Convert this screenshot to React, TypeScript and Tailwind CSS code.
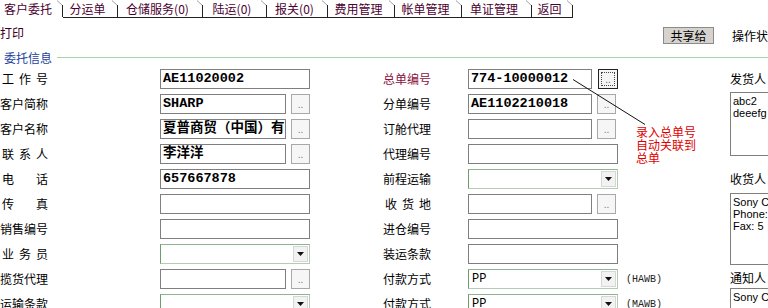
import React from 'react';

const tabs = [
  { label: '客户委托', w: 'w-[63px]', active: true },
  { label: '分运单', w: 'w-[55px]' },
  { label: '仓储服务(0)', w: 'w-[85px]' },
  { label: '陆运(0)', w: 'w-[64px]' },
  { label: '报关(0)', w: 'w-[61px]' },
  { label: '费用管理', w: 'w-[67px]' },
  { label: '帐单管理', w: 'w-[67px]' },
  { label: '单证管理', w: 'w-[70px]' },
  { label: '返回', w: 'w-[41px]' },
];

type Field = {
  label: string;
  spread?: boolean;
  labelClass?: string;
  kind: 'input' | 'pick' | 'select';
  value?: string;
  focused?: boolean;
  suffix?: string;
};

const leftFields: Field[] = [
  { label: '工 作 号', spread: true, kind: 'input', value: 'AE11020002' },
  { label: '客户简称', kind: 'pick', value: 'SHARP' },
  { label: '客户名称', kind: 'pick', value: '夏普商贸（中国）有' },
  { label: '联 系 人', spread: true, kind: 'pick', value: '李洋洋' },
  { label: '电 话', spread: true, kind: 'input', value: '657667878' },
  { label: '传 真', spread: true, kind: 'input' },
  { label: '销售编号', kind: 'input' },
  { label: '业 务 员', spread: true, kind: 'select' },
  { label: '揽货代理', kind: 'pick' },
  { label: '运输条款', kind: 'select' },
];

const midFields: Field[] = [
  { label: '总单编号', labelClass: 'text-[#8b1040]', kind: 'pick', value: '774-10000012', focused: true },
  { label: '分单编号', kind: 'pick', value: 'AE1102210018' },
  { label: '订舱代理', kind: 'pick' },
  { label: '代理编号', kind: 'input' },
  { label: '前程运输', kind: 'select' },
  { label: '收 货 地', spread: true, kind: 'pick' },
  { label: '进仓编号', kind: 'input' },
  { label: '装运条款', kind: 'input' },
  { label: '付款方式', kind: 'select', value: 'PP', suffix: '(HAWB)' },
  { label: '付款方式', kind: 'select', value: 'PP', suffix: '(MAWB)' },
];

function Label({ f }: { f: Field }) {
  if (f.spread) {
    return (
      <div className={`flex w-[48px] justify-between pl-[2px] ${f.labelClass ?? ''}`}>
        {f.label.split(' ').map((c, i) => (
          <span key={i}>{c}</span>
        ))}
      </div>
    );
  }
  return <span className={f.labelClass}>{f.label}</span>;
}

function TextBox({ value, w }: { value?: string; w: string }) {
  return (
    <div
      className={`${w} h-[20px] shrink-0 overflow-hidden whitespace-nowrap border border-[#7f7f7f] bg-white pl-[2px] font-['Liberation_Mono','Noto_Sans_CJK_SC',monospace] text-[13.5px] leading-[18px] font-bold text-black`}
    >
      {value}
    </div>
  );
}

function Dots({ focused }: { focused?: boolean }) {
  if (focused) {
    return (
      <div className="ml-[6px] flex h-[20px] w-[20px] shrink-0 items-center justify-center border border-[#222] bg-[#f4f4f4]">
        <div className="flex h-[14px] w-[14px] items-end justify-center border border-dotted border-[#444] font-['Liberation_Sans',sans-serif] text-[10px] leading-[10px] text-[#666]">
          ..
        </div>
      </div>
    );
  }
  return (
    <div className="ml-[5px] flex h-[20px] w-[19px] shrink-0 items-end justify-center border border-[#a8a8a8] bg-[#f6f6f6] pb-[3px] font-['Liberation_Sans',sans-serif] text-[10px] leading-[10px] text-[#777]">
      ..
    </div>
  );
}

function Select({ value }: { value?: string }) {
  return (
    <div className="flex h-[20px] w-[150px] shrink-0 items-center border border-[#b4ccb4] border-l-[#6f9c6f] border-t-[#8fb48f] bg-white">
      <span className="flex-1 pl-[3px] font-['Liberation_Mono',monospace] text-[12px] leading-[16px]">{value}</span>
      <span className="mr-[1px] flex h-[16px] w-[15px] items-center justify-center border border-[#d6d6d6] bg-[#f2f2f2]">
        <svg width="7" height="4" viewBox="0 0 7 4">
          <path d="M0 0h7L3.5 4z" fill="#111" />
        </svg>
      </span>
    </div>
  );
}

function Control({ f, pickW, fullW }: { f: Field; pickW: string; fullW: string }) {
  if (f.kind === 'select') return <Select value={f.value} />;
  if (f.kind === 'pick')
    return (
      <div className="flex">
        <TextBox value={f.value} w={pickW} />
        <Dots focused={f.focused} />
      </div>
    );
  return <TextBox value={f.value} w={fullW} />;
}

export default function App() {
  return (
    <div className="h-[308px] w-[768px] overflow-hidden bg-white font-['Noto_Sans_CJK_SC',sans-serif] text-[12px] text-black">
      {/* tabs */}
      <div className="flex h-[18px]">
        {tabs.map((t) => (
          <div
            key={t.label}
            className={`flex h-[18px] shrink-0 ${t.w} ${t.active ? '' : 'border-b border-[#222]'}`}
          >
            <span
              className={`flex-1 pt-[1px] leading-[16px] text-[#4a0030] ${t.active ? 'pl-[4px]' : 'text-center'}`}
            >
              {t.label}
            </span>
            <svg width="6" height="17" className="shrink-0">
              <path d="M0 0.5L5.5 5.5" stroke="#a0a0a0" />
              <path d="M5.5 5V18" stroke="#222" />
            </svg>
          </div>
        ))}
      </div>

      {/* toolbar */}
      <div className="flex h-[30px] items-start">
        <span className="mt-[7px] flex-1 leading-[16px] text-[#3d0020]">打印</span>
        <button className="mt-[9px] flex h-[17px] w-[51px] items-center justify-center border border-[#8a8a8a] bg-[#d6d3ce] leading-[15px]">
          共享给
        </button>
        <span className="ml-[18px] mt-[10px] w-[36px] overflow-hidden whitespace-nowrap leading-[16px]">操作状</span>
      </div>

      {/* legend */}
      <div className="flex h-[19px] items-center">
        <span className="pl-[4px] pr-[5px] text-[#1d3fa0]">委托信息</span>
        <div className="h-px flex-1 bg-[#a8d4a8]" />
      </div>

      {/* form */}
      <div className="relative flex">
        <div className="flex w-[310px] shrink-0 flex-col">
          {leftFields.map((f, i) => (
            <div key={i} className="flex h-[25px] pt-[2px]">
              <div className="flex h-[20px] w-[160px] shrink-0 items-center">
                <Label f={f} />
              </div>
              <Control f={f} pickW="w-[126px]" fullW="w-[150px]" />
            </div>
          ))}
        </div>

        <div className="ml-[73px] flex w-[347px] shrink-0 flex-col">
          {midFields.map((f, i) => (
            <div key={i} className="flex h-[25px] pt-[2px]">
              <div className="flex h-[20px] w-[85px] shrink-0 items-center">
                <Label f={f} />
              </div>
              <Control f={f} pickW="w-[124px]" fullW="w-[150px]" />
              {f.suffix && (
                <span className="ml-[8px] flex h-[20px] items-center font-['Liberation_Mono',monospace] text-[10px] text-[#222]">
                  {f.suffix}
                </span>
              )}
            </div>
          ))}
        </div>

        <div className="flex w-[38px] shrink-0 flex-col">
          <div className="mt-[2px] flex h-[20px] items-center whitespace-nowrap">发货人</div>
          <div className="mt-[3px] h-[64px] w-[38px] overflow-hidden border border-r-0 border-[#7f7f7f] pl-[2px] pt-[2px] font-['Liberation_Sans',sans-serif] text-[11px] leading-[12px] whitespace-nowrap">
            <div>abc2</div>
            <div>deeefg</div>
          </div>
          <div className="mt-[13px] flex h-[20px] items-center whitespace-nowrap">收货人</div>
          <div className="mt-[4px] h-[72px] w-[38px] overflow-hidden border border-r-0 border-[#7f7f7f] pl-[2px] pt-[2px] font-['Liberation_Sans',sans-serif] text-[11px] leading-[12px] whitespace-nowrap">
            <div>Sony Co</div>
            <div>Phone:</div>
            <div>Fax: 5</div>
          </div>
          <div className="mt-[3px] flex h-[20px] items-center whitespace-nowrap">通知人</div>
          <div className="h-[40px] w-[38px] overflow-hidden border border-r-0 border-[#7f7f7f] pl-[2px] pt-[2px] font-['Liberation_Sans',sans-serif] text-[11px] leading-[12px] whitespace-nowrap">
            <div>Sony Co</div>
          </div>
        </div>

        {/* annotation overlay */}
        <svg className="pointer-events-none absolute left-0 top-0" width="768" height="241">
          <path d="M573 12.5L645 57.5" stroke="#111" strokeWidth="1" />
        </svg>
        <div className="absolute left-[636px] top-[58px] text-[12px] leading-[13px] text-[#dd0000]">
          <div>录入总单号</div>
          <div>自动关联到</div>
          <div>总单</div>
        </div>
      </div>
    </div>
  );
}
